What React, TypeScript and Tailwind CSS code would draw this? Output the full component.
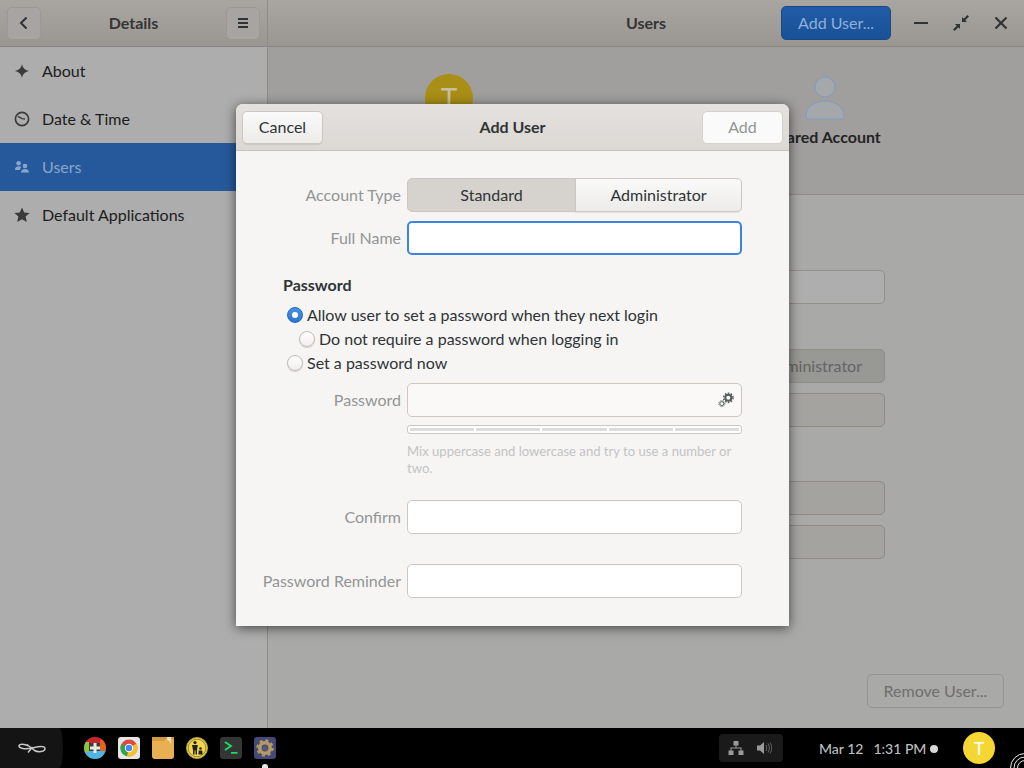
import React from "react";

function Btn({ className = "", children }: { className?: string; children?: React.ReactNode }) {
  return <div className={"flex items-center justify-center rounded-[5px] border " + className}>{children}</div>;
}

function Radio({ checked }: { checked?: boolean }) {
  return checked ? (
    <div className="flex h-4 w-4 shrink-0 items-center justify-center rounded-full border border-[#1b6acb] bg-gradient-to-b from-[#4a90e0] to-[#2f74d0]">
      <div className="h-1.5 w-1.5 rounded-full bg-white" />
    </div>
  ) : (
    <div className="h-4 w-4 shrink-0 rounded-full border border-[#c0bbb5] bg-gradient-to-b from-white to-[#f0eeeb] shadow-[0_1px_1px_rgba(0,0,0,0.15)]" />
  );
}

function DockIcon({ children }: { children: React.ReactNode }) {
  return <div className="flex h-[22px] w-[22px] items-center justify-center overflow-hidden">{children}</div>;
}

function FormRow({ label, className = "", children }: { label: string; className?: string; children: React.ReactNode }) {
  return (
    <div className={"flex items-center " + className}>
      <div className="w-[171px] shrink-0 pr-[6px] text-right text-[16px] text-[#929595]">{label}</div>
      {children}
    </div>
  );
}

const sideItems = [
  {
    label: "About",
    icon: (
      <svg viewBox="0 0 16 16" className="h-4 w-4" fill="#3a3a3a">
        <path d="M8 1 C8.6 4.6 10.6 7 15 8 C10.6 9 8.6 11.4 8 15 C7.4 11.4 5.4 9 1 8 C5.4 7 7.4 4.6 8 1 Z" />
      </svg>
    ),
  },
  {
    label: "Date & Time",
    icon: (
      <svg viewBox="0 0 16 16" className="h-4 w-4" fill="none" stroke="#3a3a3a" strokeWidth="1.6">
        <circle cx="8" cy="8" r="6.6" />
        <path d="M3.8 5.4 L8 7.6 L11 8" strokeWidth="1.3" />
      </svg>
    ),
  },
  {
    label: "Users",
    active: true,
    icon: (
      <svg viewBox="0 0 16 16" className="h-4 w-4" fill="#8aa5cc">
        <circle cx="4.6" cy="4.2" r="2.3" />
        <path d="M1 10.5 C1 8 3 7.2 4.8 7.2 C5.8 7.2 6.8 7.4 7.4 8 C6.4 9 6 10 6 11 L1 11 Z" />
        <circle cx="11" cy="7" r="2.3" />
        <path d="M7 13.6 C7 11 9 10 11 10 C13 10 15 11 15 13.6 Z" />
      </svg>
    ),
  },
  {
    label: "Default Applications",
    icon: (
      <svg viewBox="0 0 16 16" className="h-4 w-4" fill="#3a3a3a">
        <path d="M8 0.6 L10.2 5.4 L15.6 6 L11.6 9.6 L12.8 15 L8 12.2 L3.2 15 L4.4 9.6 L0.4 6 L5.8 5.4 Z" />
      </svg>
    ),
  },
];

export default function App() {
  return (
    <div className="relative flex h-[768px] w-[1024px] flex-col overflow-hidden bg-black font-['Lato','Noto_Sans',sans-serif]">
      {/* Background window */}
      <div className="flex h-[728px] w-full">
        {/* Sidebar */}
        <div className="flex w-[268px] shrink-0 flex-col border-r border-[#8f8c88] bg-[#adadad]">
          <div className="flex h-[47px] shrink-0 items-center justify-between border-b border-[#8a8580] bg-gradient-to-b from-[#a9a6a2] to-[#9a9692] px-[7px]">
            <Btn className="h-[33px] w-[34px] border-[#9c9894] bg-[#a7a4a1]">
              <svg viewBox="0 0 16 16" className="h-4 w-4" fill="none" stroke="#2e3436" strokeWidth="2">
                <path d="M10.5 2.5 L5 8 L10.5 13.5" />
              </svg>
            </Btn>
            <div className="text-[16px] font-bold text-[#343535]">Details</div>
            <Btn className="h-[33px] w-[34px] border-[#9c9894] bg-[#a7a4a1]">
              <svg viewBox="0 0 16 16" className="h-4 w-4" fill="#2e3436">
                <rect x="3" y="3" width="10" height="2" />
                <rect x="3" y="7" width="10" height="2" />
                <rect x="3" y="11" width="10" height="2" />
              </svg>
            </Btn>
          </div>
          {sideItems.map((it) => (
            <div
              key={it.label}
              className={
                "flex h-[48px] items-center gap-[12px] pl-[14px] text-[16px] " +
                (it.active ? "bg-[#26599c] text-[#8aa5cc]" : "text-[#1c1c1c]")
              }
            >
              {it.icon}
              <span>{it.label}</span>
            </div>
          ))}
        </div>
        {/* Main */}
        <div className="flex min-w-0 flex-1 flex-col bg-[#a9a9a7]">
          <div className="relative flex h-[47px] shrink-0 items-center justify-end border-b border-[#8a8580] bg-gradient-to-b from-[#a9a6a2] to-[#9a9692] pr-[15px]">
            <div className="absolute left-0 right-0 text-center text-[16px] font-bold text-[#343535]">Users</div>
            <div className="relative mr-[22px] flex h-[34px] w-[110px] items-center justify-center rounded-[5px] border border-[#174a8c] bg-gradient-to-b from-[#215ca6] to-[#1a5198] text-[16px] text-[#8fb0d9]">
              Add User...
            </div>
            <div className="relative flex items-center gap-[24px]">
              <svg viewBox="0 0 16 16" className="h-4 w-4" fill="#2e3436"><rect x="1" y="7" width="14" height="2" /></svg>
              <svg viewBox="0 0 16 16" className="h-4 w-4">
                <path d="M9 2 L9 7 L14 7 Z" fill="#2e3436" />
                <path d="M10.5 5.5 L15.2 0.8" stroke="#2e3436" strokeWidth="2.2" />
                <path d="M7 14 L7 9 L2 9 Z" fill="#2e3436" />
                <path d="M5.5 10.5 L0.8 15.2" stroke="#2e3436" strokeWidth="2.2" />
              </svg>
              <svg viewBox="0 0 16 16" className="h-4 w-4" fill="none" stroke="#2e3436" strokeWidth="2.2">
                <path d="M2.5 2.5 L13.5 13.5 M13.5 2.5 L2.5 13.5" />
              </svg>
            </div>
          </div>
          {/* User strip */}
          <div className="flex h-[148px] shrink-0 items-start border-b border-[#8f8d8a] bg-[#a09f9d] pl-[81px] pt-[27px]">
            <div className="flex w-[200px] flex-col items-center">
              <div className="flex h-[48px] w-[48px] items-center justify-center rounded-full bg-[#a98f17] text-[28px] text-[#c7c1a0]">T</div>
            </div>
            <div className="ml-[176px] flex w-[200px] flex-col items-center pt-[2px]">
              <svg viewBox="0 0 40 46" className="h-[46px] w-[40px]" fill="#a5a8ab" stroke="#7f9cc4" strokeWidth="1">
                <circle cx="20" cy="11" r="10" />
                <path d="M1 40 C1 30 11 25 20 25 C29 25 39 30 39 40 C39 42.5 38 43 37 43 L3 43 C2 43 1 42.5 1 40 Z" />
              </svg>
              <div className="mt-[3px] text-[16px] font-bold text-[#242424]">Shared Account</div>
            </div>
          </div>
          {/* Details behind */}
          <div className="relative flex flex-1 flex-col items-end pr-[139px] pt-[75px]">
            <div className="h-[34px] w-[400px] rounded-[5px] border border-[#938f8b] bg-[#aeaeae]" />
            <div className="mt-[45px] flex h-[34px] w-[400px] items-center justify-end rounded-[5px] border border-[#8f8c88] bg-[#989895] pr-[22px] text-[16px] text-[#646462]">Administrator</div>
            <div className="mt-[10px] h-[34px] w-[400px] rounded-[5px] border border-[#8f8a86] bg-[#a5a3a0]" />
            <div className="mt-[54px] h-[34px] w-[400px] rounded-[5px] border border-[#8f8a86] bg-[#a5a3a0]" />
            <div className="mt-[10px] h-[34px] w-[400px] rounded-[5px] border border-[#8f8a86] bg-[#a5a3a0]" />
            <div className="absolute bottom-[20px] right-[20px] flex h-[34px] w-[137px] items-center justify-center rounded-[5px] border border-[#939391] text-[16px] text-[#6f6f6e]">Remove User...</div>
          </div>
        </div>
      </div>

      {/* Dock */}
      <div className="relative flex h-[40px] shrink-0 items-center bg-black">
        <div className="flex h-[40px] w-[63px] items-center justify-center rounded-tr-[4px_20px] rounded-br-[4px_20px] bg-[#141414]">
          <svg viewBox="0 0 28 12" className="h-[12px] w-[28px]" fill="none" stroke="#c8c8c8" strokeWidth="1.5">
            <path d="M10 4 C7 1.5 1 1.5 1 4 C1 6.5 7 7.5 14 6 C19 5 27 3 27 6.5 C27 10 20 10.5 16.5 8.5 L9 2.5" />
            <path d="M14.5 5 L10 10.5" />
          </svg>
        </div>
        <div className="ml-[21px] flex items-center gap-[12px]">
          <DockIcon>
            <svg viewBox="0 0 22 22" className="h-[22px] w-[22px]">
              <clipPath id="dock-c"><circle cx="11" cy="11" r="11" /></clipPath>
              <g clipPath="url(#dock-c)">
                <rect width="22" height="22" fill="#3d3d3d" />
                <rect x="0" y="0" width="22" height="6" fill="#c8222a" />
                <rect x="16" y="3" width="6" height="11" fill="#e8641c" />
                <rect x="0" y="14" width="22" height="8" fill="#4fb4e0" />
                <rect x="0" y="5" width="5" height="10" fill="#8cc43c" />
              </g>
              <path d="M9.5 6 H12.5 V9.5 H16 V12.5 H12.5 V16 H9.5 V12.5 H6 V9.5 H9.5 Z" fill="#e8e8e8" />
            </svg>
          </DockIcon>
          <DockIcon>
            <svg viewBox="0 0 22 22" className="h-[22px] w-[22px]">
              <rect width="22" height="22" rx="3" fill="#e6e6e6" />
              <circle cx="11" cy="11" r="8.5" fill="#dd4b3e" />
              <path d="M11 11 L3.6 6.8 A8.5 8.5 0 0 0 9 19.3 Z" fill="#2fa44f" />
              <path d="M11 11 L18.4 6.8 A8.5 8.5 0 0 1 9 19.3 Z" fill="#f6c12f" />
              <circle cx="11" cy="11" r="4.2" fill="#fff" />
              <circle cx="11" cy="11" r="3.2" fill="#4587f3" />
            </svg>
          </DockIcon>
          <DockIcon>
            <svg viewBox="0 0 22 22" className="h-[22px] w-[22px]">
              <rect width="22" height="22" rx="3" fill="#e8b052" />
              <path d="M0 4 L12 4 L14 2 L22 2 L22 0 L0 0 Z" fill="#d49a3c" />
              <path d="M15 0 L19 0 L19 7 L17.5 4 L15 3 Z" fill="#f3e4c4" />
            </svg>
          </DockIcon>
          <DockIcon>
            <svg viewBox="0 0 22 22" className="h-[22px] w-[22px]">
              <circle cx="11" cy="11" r="10.5" fill="#f2d64b" stroke="#b9a23a" strokeWidth="1" />
              <circle cx="11" cy="11" r="8.8" fill="none" stroke="#3a3a2a" strokeWidth="0.5" />
              <circle cx="9" cy="5.6" r="1.6" fill="#222" />
              <path d="M6 8 H11.8 L11 13 V17.5 H9.5 V13.5 H8.5 V17.5 H7 V13 Z" fill="#222" />
              <circle cx="14.5" cy="11.5" r="1.3" fill="#222" />
              <path d="M12.6 13.5 H16.2 L16.6 17.5 H12.4 Z" fill="#222" />
            </svg>
          </DockIcon>
          <DockIcon>
            <svg viewBox="0 0 22 22" className="h-[22px] w-[22px]">
              <rect width="22" height="22" rx="3" fill="#343634" />
              <path d="M5 5 L11 9 L5 13" fill="none" stroke="#19e06a" strokeWidth="1.8" />
              <rect x="11" y="15" width="6.5" height="1.7" fill="#19e06a" />
            </svg>
          </DockIcon>
          <DockIcon>
            <svg viewBox="0 0 22 22" className="h-[22px] w-[22px]">
              <rect width="22" height="22" rx="3" fill="#444a75" />
              <circle cx="11" cy="11" r="5.2" fill="none" stroke="#b39a66" strokeWidth="3.6" />
              <circle cx="11" cy="11" r="7.6" fill="none" stroke="#b39a66" strokeWidth="2.2" strokeDasharray="3 3" />
              <circle cx="11" cy="11" r="2.6" fill="#5a5672" />
            </svg>
          </DockIcon>
        </div>
        <div className="absolute bottom-0 left-[262px] h-[4px] w-[6px] rounded-t-full bg-[#e8e8e8]" />
        <div className="absolute left-[719px] top-[6px] flex h-[28px] w-[64px] items-center gap-[12px] rounded-[4px] bg-[#1a1a1a] pl-[9px]">
          <svg viewBox="0 0 16 16" className="h-4 w-4" fill="#999">
            <rect x="5.5" y="1" width="5" height="4.5" />
            <rect x="0.5" y="10.5" width="5" height="4.5" />
            <rect x="10.5" y="10.5" width="5" height="4.5" />
            <path d="M7.5 5 H8.5 V7.5 H13.5 V11 H12.5 V8.5 H3.5 V11 H2.5 V7.5 H7.5 Z" />
          </svg>
          <svg viewBox="0 0 16 16" className="h-4 w-4" fill="#999">
            <path d="M1 5.5 H4 L8 2 V14 L4 10.5 H1 Z" />
            <path d="M10 5 C11 6.5 11 9.5 10 11 M12 3.5 C13.8 6 13.8 10 12 12.5 M14 2.5 C16.2 5.5 16.2 10.5 14 13.5" fill="none" stroke="#666" strokeWidth="1" />
          </svg>
        </div>
        <div className="absolute left-[819px] top-[10px] flex items-center text-[14px] font-medium text-[#bdbdbd]">
          <span>Mar 12</span>
          <span className="ml-[10px]">1:31 PM</span>
          <span className="ml-[4px] h-[8px] w-[8px] rounded-full bg-[#d8d8d8]" />
        </div>
        <div className="absolute left-[963px] top-[4px] flex h-[32px] w-[32px] items-center justify-center rounded-full bg-[#f5d733] text-[18px] text-white">T</div>
        <svg viewBox="0 0 16 16" className="absolute left-[1009px] top-[24px] h-[16px] w-[16px]" fill="none" stroke="#e8e8e8" strokeWidth="1">
          <circle cx="16" cy="16" r="14.5" />
          <circle cx="16" cy="16" r="11" />
          <circle cx="16" cy="16" r="7.5" />
        </svg>
      </div>

      {/* Dialog */}
      <div className="absolute left-[236px] top-[104px] flex h-[522px] w-[553px] flex-col overflow-hidden rounded-t-[7px] bg-[#f6f5f4] shadow-[0_2px_12px_rgba(0,0,0,0.6)]">
        <div className="flex h-[47px] shrink-0 items-center justify-between border-b border-[#c9c2bb] bg-gradient-to-b from-[#e4e1de] to-[#dcd8d4] px-[6px]">
          <Btn className="h-[33px] w-[81px] border-[#cdc7c2] bg-gradient-to-b from-[#fafafa] to-[#ecebe9] text-[16px] text-[#2e3436] shadow-[0_1px_1px_rgba(0,0,0,0.08)]">Cancel</Btn>
          <div className="text-[16px] font-bold text-[#303435]">Add User</div>
          <Btn className="h-[33px] w-[81px] border-[#d5d1cc] bg-[#fbfafa] text-[16px] text-[#929595]">Add</Btn>
        </div>
        <div className="flex flex-col pt-[27px]">
          <FormRow label="Account Type" className="h-[34px]">
            <div className="flex h-[34px] w-[335px]">
              <div className="flex w-[169px] items-center justify-center rounded-l-[5px] border border-[#cdc7c2] bg-[#d6d2cd] text-[16px] text-[#2e3436]">Standard</div>
              <div className="-ml-px flex flex-1 items-center justify-center rounded-r-[5px] border border-[#cdc7c2] bg-gradient-to-b from-[#fafafa] to-[#ecebe9] text-[16px] text-[#2e3436] shadow-[0_1px_1px_rgba(0,0,0,0.08)]">Administrator</div>
            </div>
          </FormRow>
          <FormRow label="Full Name" className="mt-[9px] h-[34px]">
            <div className="h-[34px] w-[335px] rounded-[5px] border-2 border-[#3b85e0] bg-white" />
          </FormRow>
          <div className="ml-[47px] mt-[18px] text-[16px] font-bold text-[#2e3436]">Password</div>
          <div className="ml-[51px] mt-[6px] flex h-[24px] items-center gap-[4px] text-[16px] text-[#2e3436]"><Radio checked /> Allow user to set a password when they next login</div>
          <div className="ml-[63px] flex h-[24px] items-center gap-[4px] text-[16px] text-[#2e3436]"><Radio /> Do not require a password when logging in</div>
          <div className="ml-[51px] flex h-[24px] items-center gap-[4px] text-[16px] text-[#2e3436]"><Radio /> Set a password now</div>
          <FormRow label="Password" className="mt-[8px] h-[34px]">
            <div className="flex h-[34px] w-[335px] items-center justify-end rounded-[5px] border border-[#cdc7c2] bg-[#faf9f8] pr-[7px]">
              <svg viewBox="0 0 16 16" className="h-4 w-4">
                <g fill="none" stroke="#555a5a">
                  <circle cx="10.3" cy="5.8" r="3" strokeWidth="2" />
                  <circle cx="10.3" cy="5.8" r="4.7" strokeWidth="1.4" strokeDasharray="1.6 1.4" />
                  <circle cx="3.8" cy="11.6" r="2" strokeWidth="1" />
                  <circle cx="3.8" cy="11.6" r="3.1" strokeWidth="0.9" strokeDasharray="1 1" />
                </g>
              </svg>
            </div>
          </FormRow>
          <div className="ml-[171px] mt-[8px] flex h-[9px] w-[335px] gap-[2px] rounded-[3px] border border-[#cdc7c2] bg-white px-[2px] py-[2px]">
            <div className="flex-1 bg-[#dcdcdc]" />
            <div className="flex-1 bg-[#dcdcdc]" />
            <div className="flex-1 bg-[#dcdcdc]" />
            <div className="flex-1 bg-[#dcdcdc]" />
            <div className="flex-1 bg-[#dcdcdc]" />
          </div>
          <div className="ml-[171px] mt-[9px] w-[335px] text-[13.1px] leading-[17px] text-[#c3c3c3]">Mix uppercase and lowercase and try to use a number or two.</div>
          <FormRow label="Confirm" className="mt-[23px] h-[34px]">
            <div className="h-[34px] w-[335px] rounded-[5px] border border-[#cdc7c2] bg-white" />
          </FormRow>
          <FormRow label="Password Reminder" className="mt-[30px] h-[34px]">
            <div className="h-[34px] w-[335px] rounded-[5px] border border-[#cdc7c2] bg-white" />
          </FormRow>
        </div>
      </div>
    </div>
  );
}
